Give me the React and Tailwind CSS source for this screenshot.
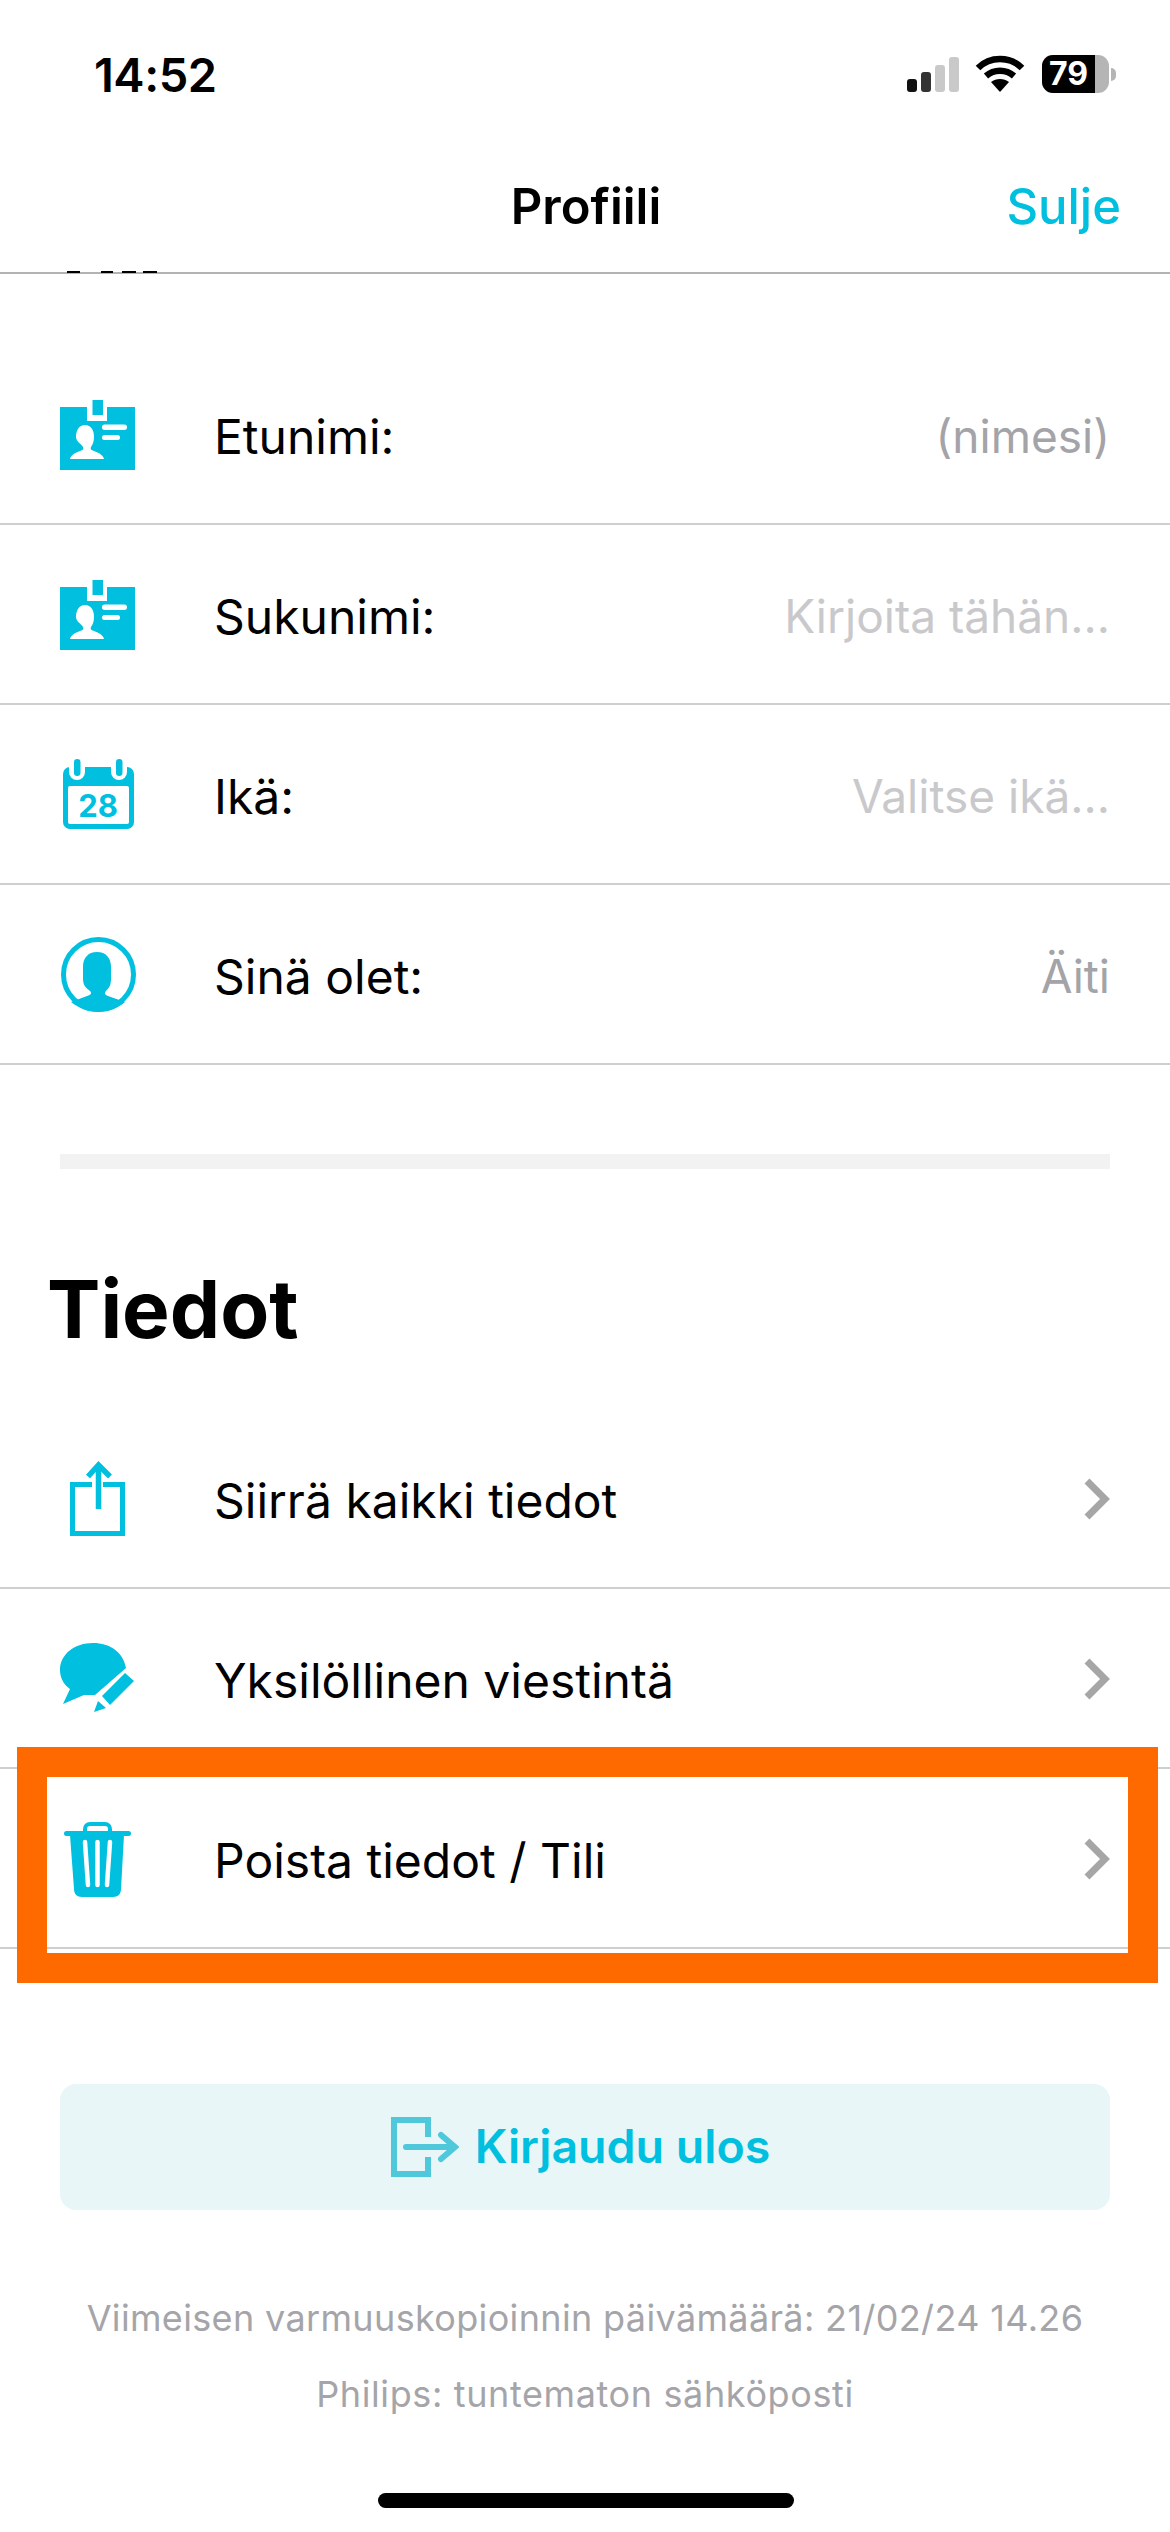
const CYAN = '#00bfdf';

const IdIcon = () => (
  <svg width="75" height="70" viewBox="0 0 75 70" className="mt-[1px]">
    <path fill={CYAN} d="M0 7h27v14h20V7h28v63H0z" />
    <rect x="32.5" y="0" width="10.5" height="15" fill={CYAN} />
    <path fill="#fff" d="M25 25c6 0 9 5 9 12 0 4-1 7-3 10-1 2 0 3 3 4 5 2 9 4 10 8H10c1-4 5-6 10-8 3-1 4-2 3-4-2-3-7-6-7-10 0-7 3-12 9-12z" />
    <rect x="42" y="24.5" width="25" height="5.5" rx="2.7" fill="#fff" />
    <rect x="42" y="35" width="18" height="5" rx="2.5" fill="#fff" />
  </svg>
);

const CalendarIcon = () => (
  <svg width="71" height="70" viewBox="0 0 71 70" className="ml-[3px]">
    <rect x="0" y="8" width="71" height="62" rx="7" fill={CYAN} />
    <rect x="5" y="27" width="61" height="38" rx="2" fill="#fff" />
    <rect x="6" y="-6" width="16" height="27" rx="8" fill="#fff" />
    <rect x="48" y="-6" width="16" height="27" rx="8" fill="#fff" />
    <rect x="11" y="0" width="6.5" height="17" rx="3.2" fill={CYAN} />
    <rect x="53" y="0" width="6.5" height="17" rx="3.2" fill={CYAN} />
    <text x="35" y="58" textAnchor="middle" fill={CYAN} fontSize="31" fontWeight="700" fontFamily="Inter, sans-serif">28</text>
  </svg>
);

const AvatarIcon = () => (
  <svg width="75" height="75" viewBox="0 0 75 75" className="ml-[1px]">
    <circle cx="37.5" cy="37.5" r="35" fill="none" stroke={CYAN} strokeWidth="5" />
    <path fill={CYAN} d="M36 15c9 0 14 6 14 15v12c0 6-2 9-5 12-2 2-1 4 2 5l17 6c-7 6-16 10-27 10s-19-4-27-10l16-6c4-1 5-3 3-5-4-3-7-6-7-12V30c0-9 5-15 14-15z" />
  </svg>
);

const ShareIcon = () => (
  <svg width="56" height="75" viewBox="0 0 56 75" className="ml-[10px]">
    <path fill="none" stroke={CYAN} strokeWidth="5" d="M22 23.5H2.5v49h50v-49H33" />
    <path fill="none" stroke={CYAN} strokeWidth="5.5" d="M28.5 6v42" />
    <path fill="none" stroke={CYAN} strokeWidth="5.5" d="M18 15.5 28.5 4 40 15.5" />
  </svg>
);

const ChatIcon = () => (
  <svg width="74" height="70" viewBox="0 0 74 70">
    <path fill={CYAN} d="M33 0c17 0 30 9 33 25L35 52l-11 0L3 61l7-15C3 41 0 34 0 27 0 11 15 0 33 0z" />
    <path fill={CYAN} d="M65 30l9 8-24 24-8-9z" />
    <path fill={CYAN} d="M38 58l8 7-12 4z" />
  </svg>
);

const TrashIcon = () => (
  <svg width="67" height="75" viewBox="0 0 67 75" className="ml-[4px] mt-[2px]">
    <path fill="none" stroke={CYAN} strokeWidth="4" d="M21 10V7c0-3 2-5 5-5h15c3 0 5 2 5 5v3" />
    <rect x="0" y="9" width="67" height="5" rx="2.5" fill={CYAN} />
    <path fill={CYAN} d="M6 13h54l-3 54c0 5-3 8-8 8H18c-5 0-8-3-8-8z" />
    <path stroke="#fff" strokeWidth="4.5" strokeLinecap="round" d="M21 20l3 43M33.5 20v43M46 20l-3 43" />
  </svg>
);

const Chevron = () => (
  <svg width="26" height="42" viewBox="0 0 26 42" className="shrink-0 mt-[2px]">
    <path fill="none" stroke="#a6a6a6" strokeWidth="7" d="M3 3l18 18L3 39" />
  </svg>
);

const LogoutIcon = () => (
  <svg width="68" height="60" viewBox="0 0 68 60">
    <path fill="none" stroke="#4fc8dc" strokeWidth="6" d="M37 20V3H3v54h34V40" />
    <path fill="none" stroke="#4fc8dc" strokeWidth="6" strokeLinecap="round" d="M15 30h48" />
    <path fill="none" stroke="#4fc8dc" strokeWidth="6" strokeLinecap="round" d="M50 18l14 12-14 12" />
  </svg>
);

const StatusBar = () => (
  <div className="h-[100px] pl-[94px] pr-[55px] pt-[47px] flex items-start justify-between">
    <span className="text-[47px] leading-[55px] font-semibold text-black tracking-[-0.5px]">14:52</span>
    <div className="flex items-start pt-[8px] translate-x-[1px]">
      <svg width="52" height="35" viewBox="0 0 52 35" className="mt-[2px]">
        <rect x="0" y="22" width="10" height="13" rx="3" fill="#111" />
        <rect x="14" y="15" width="10" height="20" rx="3" fill="#333" />
        <rect x="28" y="8" width="10" height="27" rx="3" fill="#c9c9c9" />
        <rect x="42" y="0" width="10" height="35" rx="3" fill="#c9c9c9" />
      </svg>
      <svg width="50" height="37" viewBox="0 0 50 37" className="ml-[16px]">
        <path fill="none" stroke="#000" strokeWidth="6.5" d="M3 13C15 1 35 1 47 13" />
        <path fill="none" stroke="#000" strokeWidth="6.5" d="M11 21c8-7 20-7 28 0" />
        <path fill="#000" d="M16 27c5-4 13-4 18 0L25 37z" />
      </svg>
      <div className="ml-[17px] flex items-center">
        <div className="w-[67px] h-[38px] rounded-[11px] overflow-hidden flex bg-[#b5b5b5]">
          <div className="w-[53px] bg-black text-white text-[32px] leading-[38px] font-bold text-center">79</div>
        </div>
        <div className="ml-[2px] w-[5px] h-[13px] rounded-r-full bg-[#b5b5b5]" />
      </div>
    </div>
  </div>
);

const Header = () => (
  <div className="relative h-[174px] border-b-2 border-[#b3b3b3] flex items-start justify-center pt-[77px]">
    <span className="text-[49px] leading-[60px] font-semibold text-black translate-x-[1px]">Profiili</span>
    <span className="absolute right-[49px] top-[77px] text-[49px] leading-[60px] font-medium text-[#00bfdf]">Sulje</span>
    {/* scrolled-away text peeking out under the bar */}
    <div className="absolute left-[67px] bottom-[-1px] flex">
      <div className="w-[13px] h-[2px] bg-black" />
      <div className="ml-[21px] w-[12px] h-[2px] bg-black" />
      <div className="ml-[9px] w-[14px] h-[2px] bg-black" />
      <div className="ml-[7px] w-[14px] h-[2px] bg-black" />
    </div>
  </div>
);

const Row = ({ icon, label, value, valueClass, chevron }) => (
  <div className="h-[180px] border-b-2 border-[#cfcfcf] flex items-center pr-[60px]">
    <div className="w-[214px] shrink-0 pl-[60px] flex items-center">{icon}</div>
    <span className="flex-1 pt-[5px] text-[48px] text-black">{label}</span>
    {value && <span className={`pt-[5px] text-[46px] ${valueClass}`}>{value}</span>}
    {chevron && <Chevron />}
  </div>
);

export default function App() {
  return (
    <div className="relative w-[1170px] h-[2532px] overflow-hidden bg-white font-['Inter',sans-serif]">
      <StatusBar />
      <Header />

      <div className="pt-[71px]">
        <Row icon={<IdIcon />} label="Etunimi:" value="(nimesi)" valueClass="text-[#a3a3a8]" />
        <Row icon={<IdIcon />} label="Sukunimi:" value="Kirjoita tähän..." valueClass="text-[#c9c9cc]" />
        <Row icon={<CalendarIcon />} label="Ikä:" value="Valitse ikä..." valueClass="text-[#c9c9cc]" />
        <Row icon={<AvatarIcon />} label="Sinä olet:" value="Äiti" valueClass="text-[#a3a3a8]" />
      </div>

      <div className="mx-[60px] mt-[89px] h-[15px] bg-[#f2f2f2]" />

      <h2 className="pl-[47px] mt-[94px] h-[146px] text-[80px] leading-[92px] font-bold text-black">Tiedot</h2>

      <div>
        <Row icon={<ShareIcon />} label="Siirrä kaikki tiedot" chevron />
        <Row icon={<ChatIcon />} label="Yksilöllinen viestintä" chevron />
        <Row icon={<TrashIcon />} label="Poista tiedot / Tili" chevron />
      </div>

      <div className="mx-[60px] mt-[135px] h-[126px] pr-[9px] rounded-[16px] bg-[#e8f6f8] flex items-center justify-center gap-[16px]">
        <LogoutIcon />
        <span className="text-[46.5px] font-semibold text-[#00bfdf]">Kirjaudu ulos</span>
      </div>

      <div className="mt-[84px] flex flex-col items-center gap-[28px] text-[36px] leading-[48px] tracking-[0.35px] text-[#a5a5a9]">
        <span>Viimeisen varmuuskopioinnin päivämäärä: 21/02/24 14.26</span>
        <span className="tracking-[0.62px]">Philips: tuntematon sähköposti</span>
      </div>

      <div className="absolute left-[378px] top-[2493px] w-[416px] h-[15px] rounded-full bg-black" />

      {/* orange highlight drawn over the screenshot */}
      <div className="absolute left-[17px] top-[1747px] w-[1141px] h-[236px] border-[30px] border-[#ff6a00]" />
    </div>
  );
}
